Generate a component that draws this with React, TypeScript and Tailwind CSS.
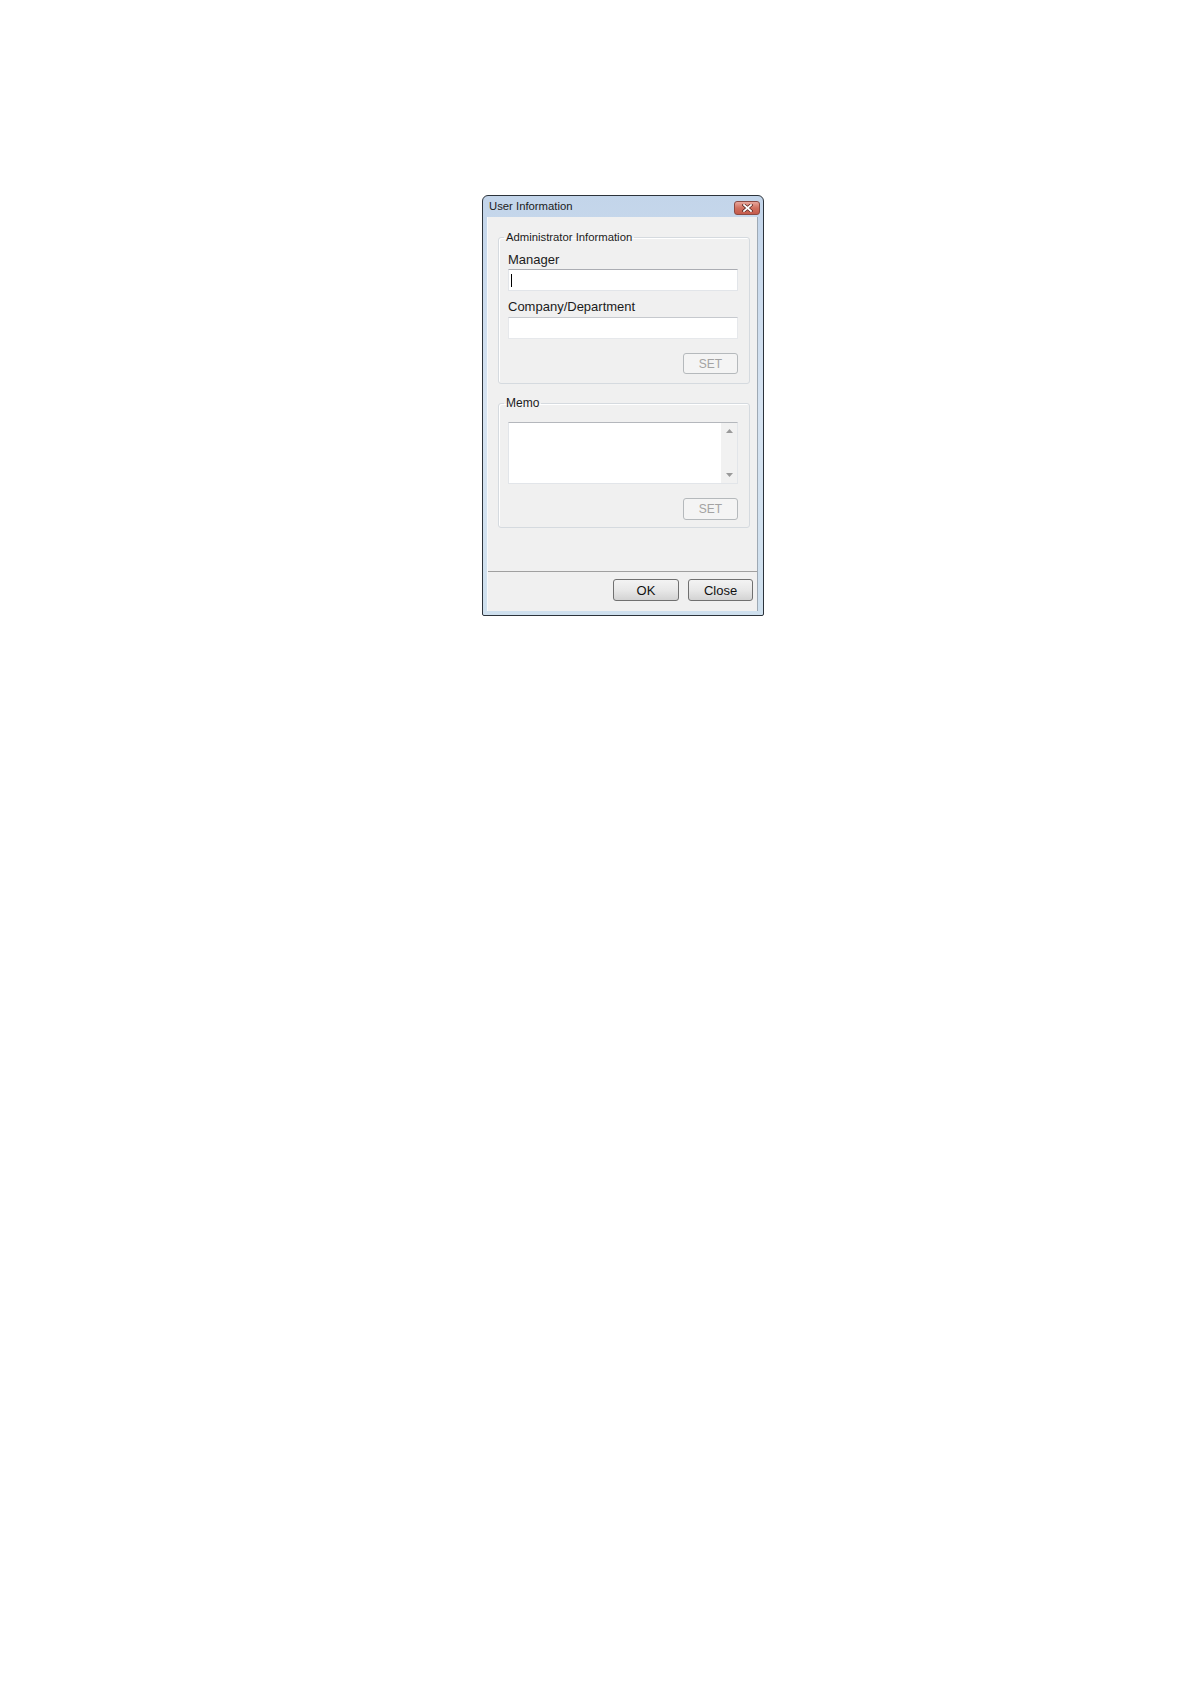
import React from "react";

const font = "font-['Liberation_Sans',Arial,sans-serif]";

const SetButton = ({ h }: { h: string }) => (
  <div className="flex justify-end">
    <button
      type="button"
      disabled
      className={`w-[55px] ${h} rounded-[3px] border border-[#b5b9bc] bg-[#f4f4f4] text-[12px] leading-none text-[#a3a3a3] ${font}`}
    >
      SET
    </button>
  </div>
);

const DialogButton = ({ label, w }: { label: string; w: string }) => (
  <button
    type="button"
    className={`${w} h-[22px] rounded-[3px] border border-[#707070] bg-gradient-to-b from-[#f3f3f3] via-[#e8e8e8] to-[#d3d3d3] text-[13px] leading-none text-[#111] ${font}`}
  >
    {label}
  </button>
);

const Arrow = ({ up }: { up?: boolean }) => (
  <svg width="7" height="4" viewBox="0 0 7 4">
    <path d={up ? "M0 4 L3.5 0 L7 4 Z" : "M0 0 L3.5 4 L7 0 Z"} fill="#9a9a9a" />
  </svg>
);

export default function App() {
  return (
    <div className={`min-h-[1684px] bg-white pl-[482px] pt-[195px] ${font}`}>
      <div className="flex h-[421px] w-[282px] flex-col rounded-t-[6px] rounded-b-[2px] border border-[#2c333b] bg-gradient-to-b from-[#c3d5ea] via-[#d6e3f1] to-[#cfe0ee]">
        {/* Title bar */}
        <div className="flex h-[21px] items-center justify-between pl-[6px] pr-[3px]">
          <span className="text-[11.3px] leading-none text-[#1b1b1b]">User Information</span>
          <div className="mt-[2px] flex h-[14px] w-[26px] items-center justify-center rounded-[3px] border border-[#8c4a42] bg-gradient-to-b from-[#e8a79c] via-[#d0705f] to-[#c45a4b]">
            <svg width="11" height="8" viewBox="0 0 11 8">
              <path d="M2 1 L9 7 M9 1 L2 7" stroke="#5a2620" strokeWidth="3.2" strokeLinecap="square" />
              <path d="M2 1 L9 7 M9 1 L2 7" stroke="#ffffff" strokeWidth="1.8" strokeLinecap="square" />
            </svg>
          </div>
        </div>

        {/* Client area */}
        <div className="ml-[4px] mr-[5px] flex h-[394px] flex-col border-x border-l-[#f7f9fb] border-r-[#9ea9b4] bg-[#f0f0f0]">
          <div className="h-[355px] border-b border-[#a0a0a0] pl-[10px] pt-[13px]">
            {/* Administrator Information */}
            <fieldset className="w-[252px] rounded-[3px] border border-[#d5dadf] pb-[9px] pl-[5px] pr-[6px] shadow-[inset_1px_1px_0_#ffffff]">
              <legend className="px-[2px] text-[11.3px] leading-[14px] text-[#1b1b1b]">Administrator Information</legend>
              <div className="pl-[4px]">
                <div className="mt-[8px] text-[13px] leading-[15px] text-[#1b1b1b]">Manager</div>
                <div className="mt-[2px] flex h-[22px] w-[230px] items-center border border-[#e2e5e9] border-t-[#abadb3] bg-white pl-[2px]">
                  <span className="h-[13px] w-px bg-black" />
                </div>
                <div className="mt-[8px] text-[13px] leading-[15px] text-[#1b1b1b]">Company/Department</div>
                <div className="mt-[3px] h-[22px] w-[230px] border border-[#e6e8eb] border-t-[#c6c9ce] bg-white" />
                <div className="mt-[14px] w-[230px]">
                  <SetButton h="h-[21px]" />
                </div>
              </div>
            </fieldset>

            {/* Memo */}
            <fieldset className="mt-[12px] w-[252px] rounded-[3px] border border-[#d5dadf] pb-[7px] pl-[5px] pr-[6px] shadow-[inset_1px_1px_0_#ffffff]">
              <legend className="px-[2px] text-[12px] leading-[14px] text-[#1b1b1b]">Memo</legend>
              <div className="pl-[4px]">
                <div className="mt-[12px] flex h-[62px] w-[230px] border border-[#e2e5e9] border-t-[#b4b7bc] bg-white">
                  <div className="flex-1" />
                  <div className="flex w-[16px] flex-col items-center justify-between bg-[#f1f1f1] py-[6px]">
                    <Arrow up />
                    <Arrow />
                  </div>
                </div>
                <div className="mt-[14px] w-[230px]">
                  <SetButton h="h-[22px]" />
                </div>
              </div>
            </fieldset>
          </div>

          {/* Bottom buttons */}
          <div className="flex justify-end gap-[9px] pr-[4px] pt-[7px]">
            <DialogButton label="OK" w="w-[66px]" />
            <DialogButton label="Close" w="w-[65px]" />
          </div>
        </div>
      </div>
    </div>
  );
}
